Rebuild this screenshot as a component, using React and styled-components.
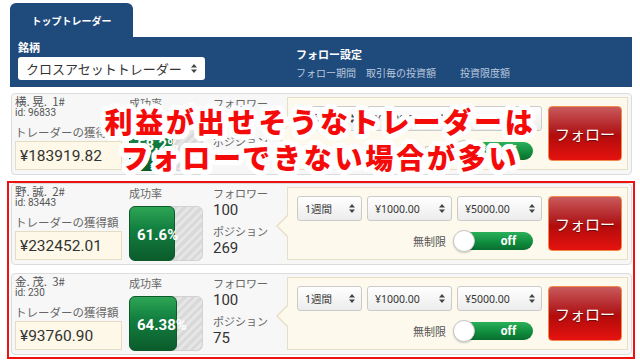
import React from "react";
import styled, { createGlobalStyle } from "styled-components";

const NAVY = "#1f4a7c";

const traders = [
  { name: "横. 晃.", rank: 1, id: 96833, amount: "¥183919.82", rate: 58.2, followers: 100, positions: 312 },
  { name: "野. 誠.", rank: 2, id: 83443, amount: "¥232452.01", rate: 61.6, followers: 100, positions: 269 },
  { name: "金. 茂.", rank: 3, id: 230, amount: "¥93760.90", rate: 64.38, followers: 100, positions: 75 },
];

function App() {
  return (
    <Page>
      <GlobalStyle />
      <Tab>トップトレーダー</Tab>
      <Header>
        <PairBlock>
          <HeadLabel>銘柄</HeadLabel>
          <HeadSelect>
            クロスアセットトレーダー
            <Arrows />
          </HeadSelect>
        </PairBlock>
        <SettingBlock>
          <HeadLabel>フォロー設定</HeadLabel>
          <SubLabels>
            <SubLabel w={70}>フォロー期間</SubLabel>
            <SubLabel w={94}>取引毎の投資額</SubLabel>
            <SubLabel>投資限度額</SubLabel>
          </SubLabels>
        </SettingBlock>
      </Header>
      <Rows>
        <TraderRow t={traders[0]} first />
        <Highlight>
          <TraderRow t={traders[1]} />
          <TraderRow t={traders[2]} />
        </Highlight>
      </Rows>
      <Caption>
        <div>利益が出せそうなトレーダーは</div>
        <div>フォローできない場合が多い</div>
      </Caption>
    </Page>
  );
}

export default App;

function TraderRow({ t, first }) {
  return (
    <Row first={first}>
      <Trader>
        <Name>
          {t.name}&nbsp;&nbsp;{t.rank}#
        </Name>
        <TraderId>id: {t.id}</TraderId>
        <AmountLabel>トレーダーの獲得額</AmountLabel>
        <Amount>{t.amount}</Amount>
      </Trader>
      <Stats>
        <SmallLabel>成功率</SmallLabel>
        <Bar>
          <BarFill style={{ width: `${t.rate}%` }}>
            <Percent>{t.rate}%</Percent>
          </BarFill>
        </Bar>
      </Stats>
      <Counts>
        <SmallLabel>フォロワー</SmallLabel>
        <Count>{t.followers}</Count>
        <SmallLabel gap>ポジション</SmallLabel>
        <Count>{t.positions}</Count>
      </Counts>
      <Panel>
        <Settings>
          <Selects>
            <Select w={65}>
              1週間
              <Arrows />
            </Select>
            <Select w={85}>
              ¥1000.00
              <Arrows />
            </Select>
            <Select w={85}>
              ¥5000.00
              <Arrows />
            </Select>
          </Selects>
          <Limit>
            無制限
            <Toggle>
              <Track>off</Track>
              <Knob />
            </Toggle>
          </Limit>
        </Settings>
        <FollowButton>フォロー</FollowButton>
      </Panel>
    </Row>
  );
}

function Arrows() {
  return (
    <svg width="6" height="9" viewBox="0 0 6 9">
      <path d="M3 0 L6 3.5 L0 3.5 Z M3 9 L6 5.5 L0 5.5 Z" fill="#444" />
    </svg>
  );
}

const GlobalStyle = createGlobalStyle`
  body {
    margin: 0;
    background: #fff;
    font-family: Roboto, "Noto Sans CJK JP", sans-serif;
  }
`;

const Page = styled.div`
  position: relative;
  width: 640px;
  height: 360px;
  box-sizing: border-box;
  padding: 3px 8px 0 10px;
  overflow: hidden;
`;

const Tab = styled.div`
  width: 123px;
  height: 34px;
  background: ${NAVY};
  border-radius: 6px 6px 0 0;
  color: #fff;
  font-family: "Noto Sans CJK JP", sans-serif;
  font-size: 10px;
  font-weight: 700;
  display: flex;
  align-items: center;
  justify-content: center;
`;

const Header = styled.div`
  height: 50px;
  background: ${NAVY};
  display: flex;
  padding: 0 8px;
  font-family: "Noto Sans CJK JP", sans-serif;
`;

const PairBlock = styled.div`
  width: 278px;
  padding-top: 4px;
`;

const HeadLabel = styled.div`
  color: #fff;
  font-size: 11px;
  font-weight: 700;
  line-height: 12px;
`;

const HeadSelect = styled.div`
  margin-top: 4px;
  width: 187px;
  height: 23px;
  box-sizing: border-box;
  background: #fff;
  border-radius: 3px;
  padding: 0 8px;
  display: flex;
  align-items: center;
  justify-content: space-between;
  color: #333;
  font-size: 13px;
`;

const SettingBlock = styled.div`
  padding-top: 11px;
`;

const SubLabels = styled.div`
  display: flex;
  margin-top: 6px;
`;

const SubLabel = styled.div`
  width: ${({ w }) => (w ? `${w}px` : "auto")};
  color: #b9c8dc;
  font-size: 10px;
  line-height: 14px;
`;

const Rows = styled.div`
  padding-top: 6px;
  margin-left: 1px;
`;

const Highlight = styled.div`
  margin: 0 -3px 0 -4px;
  border: 2px solid #f01010;
  padding: 0 1px 2px 2px;
  display: flex;
  flex-direction: column;
  gap: 8px;
`;

const Row = styled.div`
  display: flex;
  background: #f7f7f7;
  border: 1px solid #dcdcdc;
  border-radius: 4px;
  padding: 1px 3px 3px 3px;
  margin-bottom: ${({ first }) => (first ? "6px" : "0")};
`;

const Trader = styled.div`
  width: 107px;
  color: #555;
`;

const Name = styled.div`
  font-size: 11.5px;
  line-height: 12px;
  color: #555;
  font-family: "Noto Sans CJK JP", sans-serif;
`;

const TraderId = styled.div`
  font-size: 10px;
  line-height: 12px;
  color: #555;
`;

const AmountLabel = styled.div`
  margin-top: 4px;
  font-size: 11.5px;
  line-height: 18px;
  color: #666;
  font-family: "Noto Sans CJK JP", sans-serif;
  white-space: nowrap;
`;

const Amount = styled.div`
  height: 29px;
  box-sizing: border-box;
  background: #fdf8e7;
  border: 1px solid #e4ddc4;
  padding-left: 4px;
  display: flex;
  align-items: center;
  font-size: 15.5px;
  color: #333;
`;

const Stats = styled.div`
  width: 74px;
  margin-left: 7px;
`;

const SmallLabel = styled.div`
  font-size: 11px;
  line-height: 16px;
  color: #666;
  font-family: "Noto Sans CJK JP", sans-serif;
  margin-top: ${({ gap }) => (gap ? "4px" : "0")};
  white-space: nowrap;
`;

const Bar = styled.div`
  margin-top: 5px;
  height: 55px;
  border-radius: 6px;
  background: repeating-linear-gradient(
    -45deg,
    #d9d9d9 0 3px,
    #e6e6e6 3px 6px
  );
  border: 1px solid #d2d2d2;
  box-sizing: border-box;
  display: flex;
`;

const BarFill = styled.div`
  position: relative;
  margin: -1px 0 -1px -1px;
  border-radius: 6px;
  background: linear-gradient(#2ea655 0%, #138040 40%, #0b5c2b 100%);
  border: 1px solid #0c5a2a;
  display: flex;
  align-items: center;
`;

const Percent = styled.span`
  padding-left: 7px;
  margin-top: 3px;
  color: #fff;
  font-size: 15px;
  font-weight: 700;
  white-space: nowrap;
`;

const Counts = styled.div`
  width: 64px;
  margin-left: 10px;
`;

const Count = styled.div`
  font-size: 15px;
  line-height: 18px;
  color: #333;
`;

const Panel = styled.div`
  position: relative;
  flex: 1;
  margin: 2px 0 1px 10px;
  background: #fdf9ec;
  border: 1px solid #e6dfc6;
  padding: 8px 5px 0 9px;
  display: flex;

  &::before,
  &::after {
    content: "";
    position: absolute;
    top: 26px;
    border-style: solid;
    border-color: transparent;
  }
  &::before {
    left: -12px;
    border-width: 12px 12px 12px 0;
    border-right-color: #e6dfc6;
  }
  &::after {
    left: -10px;
    border-width: 11px 11px 11px 0;
    top: 27px;
    border-right-color: #fdf9ec;
  }
`;

const Settings = styled.div`
  width: 245px;
`;

const Selects = styled.div`
  display: flex;
  gap: 5px;
`;

const Select = styled.div`
  width: ${({ w }) => w}px;
  height: 25px;
  box-sizing: border-box;
  border: 1px solid #cbcbcb;
  border-radius: 3px;
  background: linear-gradient(#ffffff, #ececec);
  padding: 0 6px 0 7px;
  display: flex;
  align-items: center;
  justify-content: space-between;
  font-size: 10.5px;
  color: #333;
  font-family: "Noto Sans", "Noto Sans CJK JP", sans-serif;
`;

const Limit = styled.div`
  margin-top: 11px;
  padding-right: 9px;
  display: flex;
  justify-content: flex-end;
  align-items: center;
  gap: 7px;
  font-size: 11px;
  color: #555;
  font-family: "Noto Sans CJK JP", sans-serif;
`;

const Toggle = styled.div`
  position: relative;
  width: 80px;
  height: 18px;
`;

const Track = styled.div`
  margin-left: 5px;
  height: 18px;
  border-radius: 9px;
  background: linear-gradient(#2bb05a, #0f8a3c 60%, #0a6e30);
  color: #fff;
  font-family: Roboto, sans-serif;
  font-size: 12px;
  font-weight: 700;
  line-height: 18px;
  text-align: center;
  padding-left: 26px;
`;

const Knob = styled.div`
  position: absolute;
  left: 0;
  top: -2px;
  width: 20px;
  height: 20px;
  border-radius: 50%;
  background: #fff;
  border: 1px solid #c8c8c8;
  box-shadow: 0 1px 2px rgba(0, 0, 0, 0.2);
`;

const FollowButton = styled.div`
  margin-left: 6px;
  width: 74px;
  height: 55px;
  box-sizing: border-box;
  border: 1px solid #f08a4a;
  border-radius: 4px;
  background: linear-gradient(#c95a5c 0%, #b32124 40%, #b30c0c 55%, #e5120e 100%);
  color: #fff;
  font-family: "Noto Sans CJK JP", sans-serif;
  font-size: 15px;
  display: flex;
  align-items: center;
  justify-content: center;
  text-shadow: 0 1px 1px rgba(0, 0, 0, 0.4);
`;

const Caption = styled.div`
  position: absolute;
  top: 103px;
  left: 0;
  right: 0;
  text-align: center;
  color: #f50a0a;
  font-family: "Noto Sans CJK JP", sans-serif;
  font-weight: 900;
  font-size: 28px;
  line-height: 36px;
  letter-spacing: 2.8px;
  text-shadow:
    5px 0 0 #fff, -5px 0 0 #fff, 0 5px 0 #fff, 0 -5px 0 #fff,
    4px 3px 0 #fff, -4px 3px 0 #fff, 4px -3px 0 #fff, -4px -3px 0 #fff,
    3px 4px 0 #fff, -3px 4px 0 #fff, 3px -4px 0 #fff, -3px -4px 0 #fff,
    5px 2px 0 #fff, -5px 2px 0 #fff, 5px -2px 0 #fff, -5px -2px 0 #fff,
    2px 5px 0 #fff, -2px 5px 0 #fff, 2px -5px 0 #fff, -2px -5px 0 #fff,
    0 0 6px #fff;
`;
